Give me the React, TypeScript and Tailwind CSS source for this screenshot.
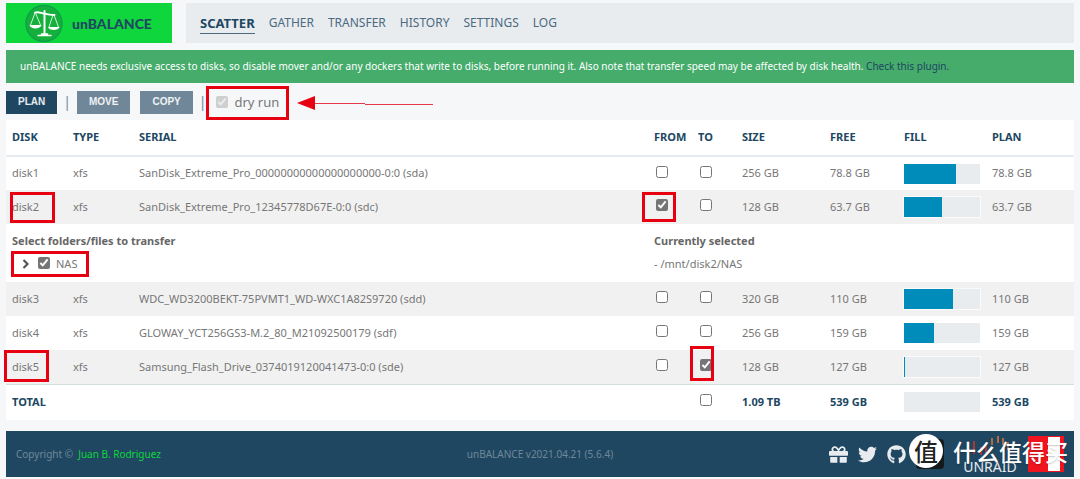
import type { ReactNode } from "react";
import { FaGift, FaGithub, FaTwitter } from "react-icons/fa";

type Disk = {
  name: string;
  serial: string;
  from: boolean;
  to: boolean;
  size: string;
  free: string;
  fill: number;
  plan: string;
};

const disks: Disk[] = [
  { name: "disk1", serial: "SanDisk_Extreme_Pro_00000000000000000000-0:0 (sda)", from: false, to: false, size: "256 GB", free: "78.8 GB", fill: 69, plan: "78.8 GB" },
  { name: "disk2", serial: "SanDisk_Extreme_Pro_12345778D67E-0:0 (sdc)", from: true, to: false, size: "128 GB", free: "63.7 GB", fill: 50, plan: "63.7 GB" },
  { name: "disk3", serial: "WDC_WD3200BEKT-75PVMT1_WD-WXC1A82S9720 (sdd)", from: false, to: false, size: "320 GB", free: "110 GB", fill: 65, plan: "110 GB" },
  { name: "disk4", serial: "GLOWAY_YCT256GS3-M.2_80_M21092500179 (sdf)", from: false, to: false, size: "256 GB", free: "159 GB", fill: 39, plan: "159 GB" },
  { name: "disk5", serial: "Samsung_Flash_Drive_0374019120041473-0:0 (sde)", from: false, to: true, size: "128 GB", free: "127 GB", fill: 1, plan: "127 GB" },
];

const navItems = ["SCATTER", "GATHER", "TRANSFER", "HISTORY", "SETTINGS", "LOG"];

// red frame drawn over a spot that needs attention
function Mark({ className }: { className: string }) {
  return (
    <span
      aria-hidden="true"
      className={`absolute border-3 border-[#e60012] pointer-events-none ${className}`}
    />
  );
}

function Check({ label, checked }: { label: string; checked: boolean }) {
  return (
    <input
      type="checkbox"
      aria-label={label}
      defaultChecked={checked}
      className="block size-3 mx-0.5 mb-1 accent-[#757575]"
    />
  );
}

function Bar({ value, outlined }: { value: number; outlined?: boolean }) {
  return (
    <div className={`h-5 w-[76px] bg-[#e8ecef] ${outlined ? "outline outline-white/70" : ""}`}>
      <div className="h-full bg-[#008cba]" style={{ width: `${value}%` }} />
    </div>
  );
}

function ActionButton({ children, active }: { children: ReactNode; active?: boolean }) {
  return (
    <button
      type="button"
      className={`h-[23px] px-3 text-[10px] font-bold text-white/90 font-['Liberation_Sans',sans-serif] ${
        active ? "bg-[#204762]" : "bg-[#6f8798]"
      }`}
    >
      {children}
    </button>
  );
}

function Scales() {
  return (
    <svg viewBox="0 0 40 40" className="size-10" aria-hidden="true">
      <circle cx="20" cy="20.5" r="18" fill="#15b03c" stroke="#109f4c" strokeWidth="1.5" />
      <g fill="none" stroke="#fff" strokeLinecap="round">
        <path d="M11 9.500c4-1 6 .8 9.500 1.200s6 1.300 10 1.300" strokeWidth="1.800" />
        <path d="M20.500 8v22" strokeWidth="2" />
        <path d="M14 32.500h13M17.500 31h6" strokeWidth="1.500" />
        <path d="M11 10L6.500 22M11.500 10l5 12M29 12l-4 12M30 12l4.500 12" strokeWidth=".8" />
      </g>
      <path d="M5.500 22h12c-1 4.500-11 4.500-12 0zM24 24h11.500c-1 4-10.500 4-11.500 0z" fill="#fff" />
    </svg>
  );
}

function Header() {
  return (
    <header className="flex gap-3.5">
      <a href="#home" className="flex items-center w-[166px] h-10 pl-[18px] gap-2 bg-[#0ed63c] text-[#204762]">
        <Scales />
        <span className="text-[14px] font-black font-[Lato,sans-serif]">unBALANCE</span>
      </a>
      <nav className="flex flex-1 items-center gap-3.5 px-3.5 bg-[#e8ecef] text-[12px] leading-5 text-[#4c6a80]">
        {navItems.map((item, i) => (
          <a
            key={item}
            href={`#${item.toLowerCase()}`}
            className={i === 0 ? "border-b border-[#4c6a80] text-[13px] font-bold text-[#204762]" : "border-b border-transparent"}
          >
            {item}
          </a>
        ))}
      </nav>
    </header>
  );
}

function Toolbar() {
  return (
    <div className="flex items-center h-6 mt-[7px] mb-1.5 text-[14px] leading-5 text-[#6f8798]">
      <ActionButton active>PLAN</ActionButton>
      <span className="mx-1.5">|</span>
      <ActionButton>MOVE</ActionButton>
      <span className="w-2.5" />
      <ActionButton>COPY</ActionButton>
      <span className="ml-1.5">|</span>
      <label className="relative flex items-center gap-1.5 ml-2.5 text-[13px] text-[#777]">
        <input type="checkbox" defaultChecked disabled className="size-3" />
        dry run
        <Mark className="-left-2.5 -right-2.5 -top-1.5 -bottom-2" />
      </label>
      <svg viewBox="0 0 136 16" className="w-[136px] h-4 ml-[18px]" aria-hidden="true">
        <path d="M0 9L18 2v14z" fill="#e60012" />
        <path d="M18 9.500h50M68 10.500h68" stroke="#e8384a" />
      </svg>
    </div>
  );
}

function DiskRow({ disk, shaded }: { disk: Disk; shaded: boolean }) {
  return (
    <tr className={shaded ? "h-[34px] bg-[#f1f1f1]" : "h-[34px]"}>
      <td className="relative px-1.5">
        {disk.name}
        {disk.name === "disk2" ? <Mark className="left-1 top-0.5 w-[45px] h-[31px]" /> : null}
        {disk.name === "disk5" ? <Mark className="-left-0.5 top-0 w-[45px] h-8" /> : null}
      </td>
      <td className="px-1.5">xfs</td>
      <td className="px-1.5">{disk.serial}</td>
      <td className="relative px-1.5">
        <Check label={`${disk.name} from`} checked={disk.from} />
        {disk.from ? <Mark className="-left-1.5 top-0.5 w-[34px] h-[30px]" /> : null}
      </td>
      <td className="relative px-1.5">
        <Check label={`${disk.name} to`} checked={disk.to} />
        {disk.to ? <Mark className="-left-0.5 -top-1 w-6 h-[35px]" /> : null}
      </td>
      <td className="px-1.5">{disk.size}</td>
      <td className="px-1.5">{disk.free}</td>
      <td className="px-1.5">
        <Bar value={disk.fill} outlined={shaded} />
      </td>
      <td className="px-1.5">{disk.plan}</td>
    </tr>
  );
}

function FolderRow() {
  return (
    <tr className="h-[58px] align-top">
      <td colSpan={3} className="px-1.5 pt-2">
        <div className="font-bold leading-[18px] text-[#666]">Select folders/files to transfer</div>
        <div className="relative flex items-center w-[76px] mt-1 pl-2.5 leading-5">
          <button type="button" aria-label="Expand NAS" className="text-[#555]">
            <svg viewBox="0 0 8 10" className="w-2 h-2.5" aria-hidden="true">
              <path d="M1.500 1L5.500 5l-4 4" fill="none" stroke="currentColor" strokeWidth="2.200" />
            </svg>
          </button>
          <label className="flex items-center gap-1.5 ml-2">
            <input type="checkbox" defaultChecked className="size-3 mb-0.5 accent-[#757575]" />
            NAS
          </label>
          <Mark className="-left-px -right-px -top-[3px] -bottom-[3px]" />
        </div>
      </td>
      <td colSpan={6} className="px-1.5 pt-2">
        <div className="font-bold leading-[18px] text-[#666]">Currently selected</div>
        <div className="mt-1 leading-5">- /mnt/disk2/NAS</div>
      </td>
    </tr>
  );
}

function DiskTable() {
  return (
    <table className="w-full table-fixed bg-white text-[11px] text-[#777]">
      <colgroup>
        <col className="w-[61px]" />
        <col className="w-[66px]" />
        <col />
        <col className="w-11" />
        <col className="w-11" />
        <col className="w-[88px]" />
        <col className="w-[74px]" />
        <col className="w-[88px]" />
        <col className="w-[88px]" />
      </colgroup>
      <thead>
        <tr className="h-9 border-b-2 border-[#e8ecef] text-left text-[#204762]">
          {["DISK", "TYPE", "SERIAL", "FROM", "TO", "SIZE", "FREE", "FILL", "PLAN"].map((title) => (
            <th key={title} className="px-1.5 font-bold">{title}</th>
          ))}
        </tr>
      </thead>
      <tbody>
        <DiskRow disk={disks[0]} shaded={false} />
        <DiskRow disk={disks[1]} shaded />
        <FolderRow />
        <DiskRow disk={disks[2]} shaded />
        <DiskRow disk={disks[3]} shaded={false} />
        <DiskRow disk={disks[4]} shaded />
      </tbody>
      <tfoot>
        <tr className="h-9 border-t border-[#d5dfe0] font-bold text-[#204762]">
          <td className="px-1.5" colSpan={4}>TOTAL</td>
          <td className="px-1.5"><Check label="all to" checked={false} /></td>
          <td className="px-1.5">1.09 TB</td>
          <td className="px-1.5">539 GB</td>
          <td className="px-1.5"><Bar value={0} /></td>
          <td className="px-1.5">539 GB</td>
        </tr>
      </tfoot>
    </table>
  );
}

function Footer() {
  return (
    <footer className="relative flex items-center h-[46px] mt-[11px] px-2.5 bg-[#204762] text-[10px] text-[#6f8798]">
      <div className="flex-1">
        Copyright © &nbsp;<a href="#author" className="text-[#0ed63c]">Juan B. Rodriguez</a>
      </div>
      <div>unBALANCE v2021.04.21 (5.6.4)</div>
      <div className="flex flex-1 items-center justify-end gap-2.5 text-[#e8ecef]">
        <a href="#donate" aria-label="Donate"><FaGift className="size-[19px]" /></a>
        <a href="#twitter" aria-label="Twitter"><FaTwitter className="size-[19px]" /></a>
        <a href="#github" aria-label="GitHub"><FaGithub className="size-[19px]" /></a>
        <span className="w-7 h-[30px] rounded-sm bg-[#15191c]" />
        <a href="#unraid" aria-label="Unraid" className="flex flex-col items-center w-14 ml-2">
          <svg viewBox="0 0 56 26" className="w-14 h-[26px]" aria-hidden="true">
            <path d="M12 8v13M19 14v8M24 12v8" stroke="#d8372c" strokeWidth="1.500" />
            <path d="M30 5v7M36 3v7M41 5v7M46 9v8" stroke="#e07a3a" strokeWidth="1.500" />
          </svg>
          <span className="text-[14px] leading-4">UNRAID</span>
        </a>
        <span className="flex w-9 h-9 py-px bg-[#f0141e]">
          <span className="w-3 ml-5 bg-white" />
        </span>
      </div>
      <div className="absolute right-1.5 top-0.5 flex items-center gap-2.5 h-9 text-white font-['Noto_Sans_CJK_SC',sans-serif]">
        <span className="flex items-center justify-center size-[34px] rounded-full bg-white text-[24px] leading-8 font-medium text-[#222]">
          值
        </span>
        <span className="text-[23px] leading-8 font-medium text-shadow-sm">什么值得买</span>
      </div>
    </footer>
  );
}

export default function App() {
  return (
    <div className="min-h-screen px-1.5 pt-[3px] pb-0.5 bg-[#f6f7f9] font-['Noto_Sans',sans-serif]">
      <Header />
      <div className="mt-[7px] px-3.5 leading-[33px] bg-[#45ac6b] text-[10px] text-white">
        unBALANCE needs exclusive access to disks, so disable mover and/or any dockers that write to disks, before
        running it. Also note that transfer speed may be affected by disk health.{" "}
        <a href="#plugin" className="text-[#204762]">Check this plugin.</a>
      </div>
      <Toolbar />
      <DiskTable />
      <Footer />
    </div>
  );
}
